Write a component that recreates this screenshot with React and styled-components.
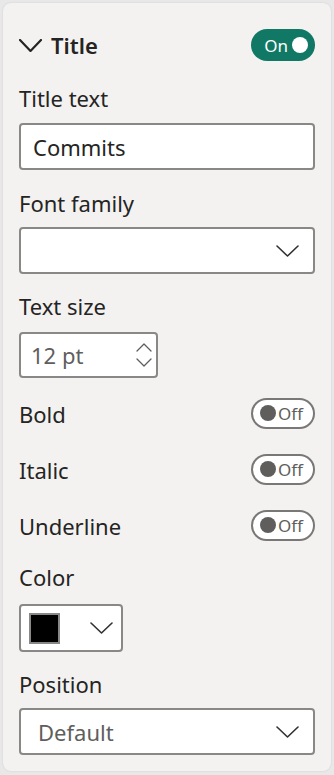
import React from "react";
import styled, { createGlobalStyle } from "styled-components";

const Global = createGlobalStyle`
  html, body { margin: 0; padding: 0; background: #e8e8e8; }
  body { font-family: "Noto Sans", "Open Sans", sans-serif; color: #252423; }
  * { box-sizing: border-box; }
`;

const Page = styled.div`
  padding: 3px;
  width: 334px;
  height: 775px;
`;

const Panel = styled.div`
  width: 328px;
  height: 768px;
  background: #f3f2f1;
  border-radius: 8px;
  box-shadow: 0 0 2px rgba(0,0,0,0.12);
  padding: 26px 16px 0 16px;
  display: flex;
  flex-direction: column;
`;

const Header = styled.div`
  display: flex;
  align-items: center;
  justify-content: space-between;
  height: 32px;
`;

const HeaderTitle = styled.div`
  display: flex;
  align-items: center;
  gap: 9px;
  font-size: 22px;
  font-weight: 600;
  color: #252423;
`;

const Field = styled.div`
  display: flex;
  flex-direction: column;
  margin-top: ${(p) => p.$mt || 18}px;
`;

const Label = styled.div`
  font-size: 22px;
  line-height: 31px;
  color: #252423;
  margin-bottom: ${(p) => (p.$mb != null ? p.$mb : 12) - 3}px;
`;

const Box = styled.div`
  width: ${(p) => p.$w || "296px"};
  height: ${(p) => p.$h || 47}px;
  background: #ffffff;
  border: 2px solid #8a8886;
  border-radius: 4px;
  display: flex;
  align-items: center;
  justify-content: space-between;
  padding: ${(p) => p.$pad || "0 12px 0 12px"};
  font-size: 22px;
  color: ${(p) => (p.$muted ? "#605e5c" : "#252423")};
`;

const Spinner = styled.div`
  display: flex;
  flex-direction: column;
  gap: 6px;
  align-items: center;
`;

const ToggleRow = styled.div`
  display: flex;
  align-items: center;
  justify-content: space-between;
  height: 32px;
  margin-top: ${(p) => p.$mt || 24}px;
`;

const RowLabel = styled.div`
  font-size: 22px;
  padding-top: 1px;
  color: #252423;
`;

const Toggle = styled.div`
  width: 64px;
  height: ${(p) => (p.$on ? 32 : 31)}px;
  border-radius: 16px;
  display: flex;
  align-items: center;
  padding: ${(p) => (p.$on ? "0 7px 0 0" : "0 0 0 7px")};
  gap: ${(p) => (p.$on ? 4 : 2)}px;
  font-size: 17px;
  background: ${(p) => (p.$on ? "#117865" : "#ffffff")};
  border: ${(p) => (p.$on ? "none" : "2px solid #7a7876")};
  color: ${(p) => (p.$on ? "#ffffff" : "#605e5c")};
  justify-content: ${(p) => (p.$on ? "flex-end" : "flex-start")};
`;

const Knob = styled.span`
  width: 16px;
  height: 16px;
  border-radius: 50%;
  background: ${(p) => (p.$on ? "#ffffff" : "#605e5c")};
  flex: none;
`;

const Swatch = styled.span`
  width: 31px;
  height: 31px;
  background: #000;
  border: 2px solid #8a8886;
`;

const Chevron = ({ w = 23, h = 12, color = "#323130", sw = 1.6 }) => (
  <svg width={w} height={h} viewBox={`0 0 ${w} ${h}`} fill="none">
    <path d={`M1 1 L${w / 2} ${h - 1} L${w - 1} 1`} stroke={color} strokeWidth={sw} strokeLinecap="round" strokeLinejoin="round" />
  </svg>
);

const SmallChev = ({ up }) => (
  <svg width="16" height="9" viewBox="0 0 16 9" fill="none">
    <path d={up ? "M1 8 L8 1 L15 8" : "M1 1 L8 8 L15 1"} stroke="#605e5c" strokeWidth="1.3" strokeLinecap="round" strokeLinejoin="round" />
  </svg>
);

const OffToggle = () => (
  <Toggle>
    <Knob />
    <span>Off</span>
  </Toggle>
);

export default function App() {
  return (
    <Page>
      <Global />
      <Panel>
        <Header>
          <HeaderTitle>
            <Chevron w={23} h={13} color="#252423" sw={2.2} />
            <span>Title</span>
          </HeaderTitle>
          <Toggle $on>
            <span>On</span>
            <Knob $on />
          </Toggle>
        </Header>

        <Field $mt={22}>
          <Label>Title text</Label>
          <Box $pad="0 12px">Commits</Box>
        </Field>

        <Field $mt={18}>
          <Label $mb={11}>Font family</Label>
          <Box $pad="0 14px 0 12px">
            <span />
            <Chevron />
          </Box>
        </Field>

        <Field $mt={17}>
          <Label $mb={13}>Text size</Label>
          <Box $w="139px" $h={46} $muted $pad="0 4px 0 10px">
            <span>12 pt</span>
            <Spinner>
              <SmallChev up />
              <SmallChev />
            </Spinner>
          </Box>
        </Field>

        <ToggleRow $mt={19}>
          <RowLabel>Bold</RowLabel>
          <OffToggle />
        </ToggleRow>
        <ToggleRow>
          <RowLabel>Italic</RowLabel>
          <OffToggle />
        </ToggleRow>
        <ToggleRow>
          <RowLabel>Underline</RowLabel>
          <OffToggle />
        </ToggleRow>

        <Field $mt={21}>
          <Label $mb={14}>Color</Label>
          <Box $w="104px" $h={48} $pad="0 8px 0 8px">
            <Swatch />
            <Chevron />
          </Box>
        </Field>

        <Field $mt={17}>
          <Label $mb={11}>Position</Label>
          <Box $muted $pad="0 14px 0 17px">
            <span>Default</span>
            <Chevron />
          </Box>
        </Field>
      </Panel>
    </Page>
  );
}
